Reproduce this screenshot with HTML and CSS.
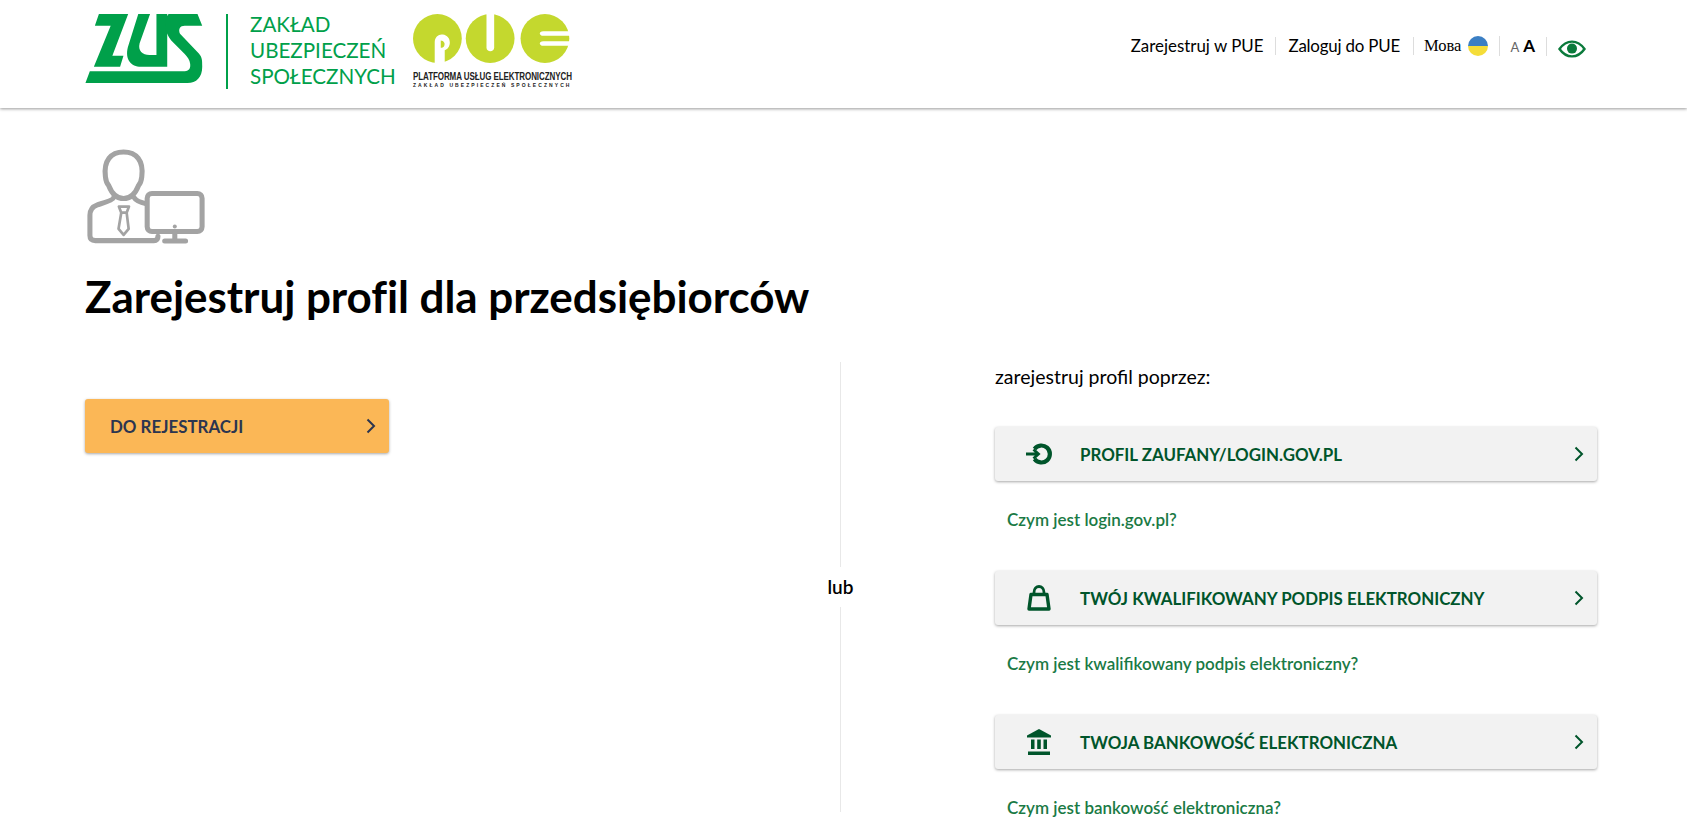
FILE: index.html
```html
<!DOCTYPE html>
<html lang="pl">
<head>
  <meta charset="UTF-8" />
  <title>Zarejestruj profil dla przedsiębiorców</title>
  <link rel="stylesheet" href="styles.css">
</head>
<body>

  <!-- HEADER -->
  <header class="top">
    <div class="brand">
      <svg class="zus-logo" viewBox="15 13 348 208" aria-label="ZUS">
        <path fill="#00a04a" d="M55 13H142L95 137H128L118 170H40L90 48H43Z"/>
        <path fill="#00a04a" d="M172 13H207L176 100C170 122 185 135 205 135H226V13H258V170H180C150 170 132 148 141 112Z"/>
        <path fill="#00a04a" d="M262 13H348L362 48H310C296 48 290 58 296 72L352 130C362 142 362 150 362 170C362 202 345 218 318 218H15L28 183H310C324 183 328 172 326 160C325 150 318 140 310 132L270 92C250 68 245 30 262 13Z"/>
      </svg>
      <div class="brand-sep"></div>
      <div class="brand-name">ZAKŁAD<br>UBEZPIECZEŃ<br>SPOŁECZNYCH</div>
      <div class="pue">
        <svg class="pue-logo" viewBox="25 15 470 146" aria-label="PUE">
          <circle cx="98" cy="88" r="73" fill="#c4d82e"/>
          <path fill="#fff" d="M90 165V100C90 82 103 74 114 76C134 78 141 100 130 116C127 120 124 122 120 123V165Z"/>
          <path fill="#c4d82e" d="M108 94C118 94 122 104 118 111C116 114 112 116 108 116Z"/>
          <circle cx="256" cy="88" r="73" fill="#c4d82e"/>
          <path fill="#fff" d="M245 10H268V115C268 130 245 130 245 115Z"/>
          <circle cx="420" cy="88" r="73" fill="#c4d82e"/>
          <path fill="#fff" d="M500 66H415C401 66 401 80 415 80H500ZM500 96H415C401 96 401 110 415 110H500Z"/>
        </svg>
        <div class="pue-title">PLATFORMA USŁUG ELEKTRONICZNYCH</div>
        <div class="pue-sub">ZAKŁAD UBEZPIECZEŃ SPOŁECZNYCH</div>
      </div>
    </div>

    <nav class="menu">
      <a class="menu-item">Zarejestruj w PUE</a>
      <a class="menu-item menu-login">Zaloguj do PUE</a>
      <span class="menu-item lang">
        <span class="lang-name">Мова</span>
        <svg class="flag" viewBox="0 0 20 20"><path fill="#3b7fc4" d="M0 10a10 10 0 0 1 20 0Z"/><path fill="#f5dd38" d="M0 10a10 10 0 0 0 20 0Z"/></svg>
      </span>
      <span class="menu-item sizes"><span class="size-s">A</span><span class="size-l">A</span></span>
      <span class="menu-item eye-item">
        <svg class="eye" viewBox="0 0 28 18"><path fill="none" stroke="#0b7a3b" stroke-width="2.4" d="M1.5 9C5 4 9 1.6 14 1.6S23 4 26.5 9C23 14 19 16.4 14 16.4S5 14 1.5 9Z"/><circle cx="14" cy="8.6" r="5" fill="#0b7a3b"/></svg>
      </span>
    </nav>
  </header>

  <main class="page">
    <svg class="person" viewBox="50 40 350 285">
      <g fill="none" stroke="#a3a3a3" stroke-width="15" stroke-linecap="round" stroke-linejoin="round">
        <path d="M106 125C100 78 122 52 160 52C198 52 220 78 214 125C213 135 209 146 204 152C195 175 180 190 160 190C140 190 125 175 116 152C111 146 107 135 106 125Z"/>
        <path d="M130 188C128 195 100 203 82 209C68 214 60 226 60 240V300C60 310 66 315 76 315H250C258 315 262 310 262 302"/>
        <path d="M192 188C196 196 212 202 228 206"/>
        <rect x="230" y="175" width="163" height="113" rx="14"/>
        <path d="M312 292V314M282 316H344"/>
      </g>
      <g fill="none" stroke="#a3a3a3" stroke-width="8" stroke-linejoin="round">
        <path d="M146 214H176L169 232H153ZM153 232L145 280L160 298L175 280L169 232"/>
      </g>
      <circle cx="312" cy="273" r="6" fill="#a3a3a3"/>
    </svg>

    <h1 class="title">Zarejestruj profil dla przedsiębiorców</h1>

    <div class="columns">
      <!-- LEFT -->
      <div class="col-left">
        <a class="btn btn-orange">
          <span>DO REJESTRACJI</span>
          <svg class="chev" viewBox="0 0 10 16"><path d="M1.5 1.5L8 8L1.5 14.5" fill="none" stroke="#2b3550" stroke-width="2"/></svg>
        </a>
      </div>

      <div class="divider">
        <div class="divider-line"></div>
        <div class="divider-text">lub</div>
        <div class="divider-line"></div>
      </div>

      <!-- RIGHT -->
      <div class="col-right">
        <p class="lead">zarejestruj profil poprzez:</p>

        <div class="option">
          <a class="btn btn-grey">
            <span class="btn-icon">
              <svg viewBox="0 0 26 22" width="26" height="22"><path d="M8.5 6A8.5 8.5 0 1 1 8.5 16" fill="none" stroke="#00552b" stroke-width="4.2"/><path d="M0 11H11M7.5 6.5L12.5 11L7.5 15.5" fill="none" stroke="#00552b" stroke-width="2.8"/></svg>
            </span>
            <span class="btn-text">PROFIL ZAUFANY/LOGIN.GOV.PL</span>
            <svg class="chev" viewBox="0 0 10 16"><path d="M1.5 1.5L8 8L1.5 14.5" fill="none" stroke="#00552b" stroke-width="2"/></svg>
          </a>
          <a class="info-link">Czym jest login.gov.pl?</a>
        </div>

        <div class="option">
          <a class="btn btn-grey">
            <span class="btn-icon">
              <svg viewBox="0 0 24 26" width="24" height="26"><path d="M4 9.5H20L22 24H2Z" fill="none" stroke="#00552b" stroke-width="3.4" stroke-linejoin="round"/><path d="M7 9.5V7.5C7 -0.5 17 -0.5 17 7.5V9.5" fill="none" stroke="#00552b" stroke-width="2.8"/></svg>
            </span>
            <span class="btn-text">TWÓJ KWALIFIKOWANY PODPIS ELEKTRONICZNY</span>
            <svg class="chev" viewBox="0 0 10 16"><path d="M1.5 1.5L8 8L1.5 14.5" fill="none" stroke="#00552b" stroke-width="2"/></svg>
          </a>
          <a class="info-link">Czym jest kwalifikowany podpis elektroniczny?</a>
        </div>

        <div class="option">
          <a class="btn btn-grey">
            <span class="btn-icon">
              <svg viewBox="0 0 24 26" width="24" height="26" fill="#00552b"><path d="M12 0L24 6.5V8.5H0V6.5Z"/><path d="M4 10.5H7.5V20H4ZM10.2 10.5H13.8V20H10.2ZM16.5 10.5H20V20H16.5ZM1 22.5H23V26H1Z"/></svg>
            </span>
            <span class="btn-text">TWOJA BANKOWOŚĆ ELEKTRONICZNA</span>
            <svg class="chev" viewBox="0 0 10 16"><path d="M1.5 1.5L8 8L1.5 14.5" fill="none" stroke="#00552b" stroke-width="2"/></svg>
          </a>
          <a class="info-link">Czym jest bankowość elektroniczna?</a>
        </div>
      </div>
    </div>
  </main>

</body>
</html>
```

FILE: styles.css
```css
body {
  margin: 0;
  background: #fff;
  color: #000;
  font-family: Lato, "Open Sans", sans-serif;
}

/* header */
.top {
  height: 108px;
  box-sizing: border-box;
  padding: 0 101px 0 85px;
  display: flex;
  align-items: center;
  justify-content: space-between;
  box-shadow: 0 1px 3px rgba(0, 0, 0, 0.4);
}
.brand {
  display: flex;
  align-items: flex-start;
  padding-top: 14px;
  height: 108px;
  box-sizing: border-box;
}
.zus-logo {
  width: 118px;
  height: 70px;
}
.brand-sep {
  width: 2px;
  height: 75px;
  background: #00a04a;
  margin: 0 22px 0 23px;
}
.brand-name {
  color: #00a04a;
  font-size: 20.6px;
  line-height: 26px;
  margin-top: -3px;
  width: 163px;
  white-space: nowrap;
}
.pue {
  width: 158px;
}
.pue-logo {
  display: block;
  width: 157px;
  height: 49px;
}
.pue-title {
  font-family: "Liberation Sans", sans-serif;
  font-weight: 700;
  font-size: 10px;
  line-height: 10px;
  margin-top: 9px;
  color: #222;
  white-space: nowrap;
  letter-spacing: -0.1px;
  transform: scaleX(0.8);
  transform-origin: left;
}
.pue-sub {
  font-family: "Liberation Sans", sans-serif;
  font-weight: 700;
  font-size: 5px;
  line-height: 7px;
  color: #222;
  white-space: nowrap;
  letter-spacing: 2.07px;
}
.menu {
  display: flex;
  align-items: center;
  margin-top: -16px;
}
.menu-item {
  font-size: 16.9px;
  line-height: 18px;
  padding: 0 12px;
  border-right: 1px solid #ddd;
  color: #000;
}
.menu-item:last-child {
  border-right: 0;
  padding-right: 0;
}
.menu-login {
  letter-spacing: -0.2px;
  padding-right: 13px;
}
.lang {
  display: flex;
  align-items: center;
  gap: 7px;
  padding: 0 11px 0 10px;
}
.lang-name {
  font-family: "Liberation Serif", serif;
  font-size: 16.5px;
}
.flag {
  width: 20px;
  height: 20px;
}
.sizes {
  display: flex;
  align-items: baseline;
  gap: 4px;
  padding: 0 11px 0 10px;
}
.size-s {
  font-size: 13px;
  color: #666;
}
.size-l {
  font-size: 17px;
  font-weight: 700;
}
.eye-item {
  display: flex;
  padding-left: 11px;
}
.eye {
  width: 28px;
  height: 18px;
  margin-top: 5px;
}

/* content */
.page {
  padding: 40px 90px 20px 85px;
}
.person {
  display: block;
  width: 119px;
  height: 96px;
  margin-left: 1px;
}
.title {
  font-size: 44px;
  line-height: 54px;
  font-weight: 700;
  letter-spacing: -0.06px;
  margin: 25px 0 39px;
}
.columns {
  display: flex;
  height: 450px;
}
.col-left {
  width: 755px;
  padding-top: 37px;
  box-sizing: border-box;
}
.divider {
  width: 1px;
  display: flex;
  flex-direction: column;
  align-items: center;
}
.divider-line {
  flex: 1;
  width: 1px;
  background: #e8e8e8;
}
.divider-text {
  font-size: 19px;
  font-weight: 600;
  line-height: 40px;
}
.col-right {
  flex: 1;
  padding-left: 154px;
}
.lead {
  font-size: 19.5px;
  line-height: 24px;
  margin: 3px 0 38px;
}

/* buttons */
.btn {
  display: flex;
  align-items: center;
  height: 54px;
  box-sizing: border-box;
  border-radius: 3px;
  font-size: 16.9px;
  font-weight: 700;
  box-shadow: 0 1px 3px rgba(0, 0, 0, 0.35);
  cursor: pointer;
}
.btn-orange {
  width: 304px;
  background: #fbb756;
  color: #2b3550;
  padding: 0 13px 0 25px;
  justify-content: space-between;
}
.btn-grey {
  background: #f2f2f2;
  color: #00552b;
  padding-right: 13px;
}
.btn-icon {
  width: 85px;
  padding-left: 3px;
  box-sizing: border-box;
  display: flex;
  justify-content: center;
  flex: none;
}
.btn-text {
  flex: 1;
}
.chev {
  width: 10px;
  height: 16px;
}
.option {
  margin-bottom: 39px;
}
.info-link {
  display: block;
  margin: 27px 0 0 12px;
  font-size: 17px;
  line-height: 24px;
  font-weight: 600;
  color: #1a7a45;
}
```
